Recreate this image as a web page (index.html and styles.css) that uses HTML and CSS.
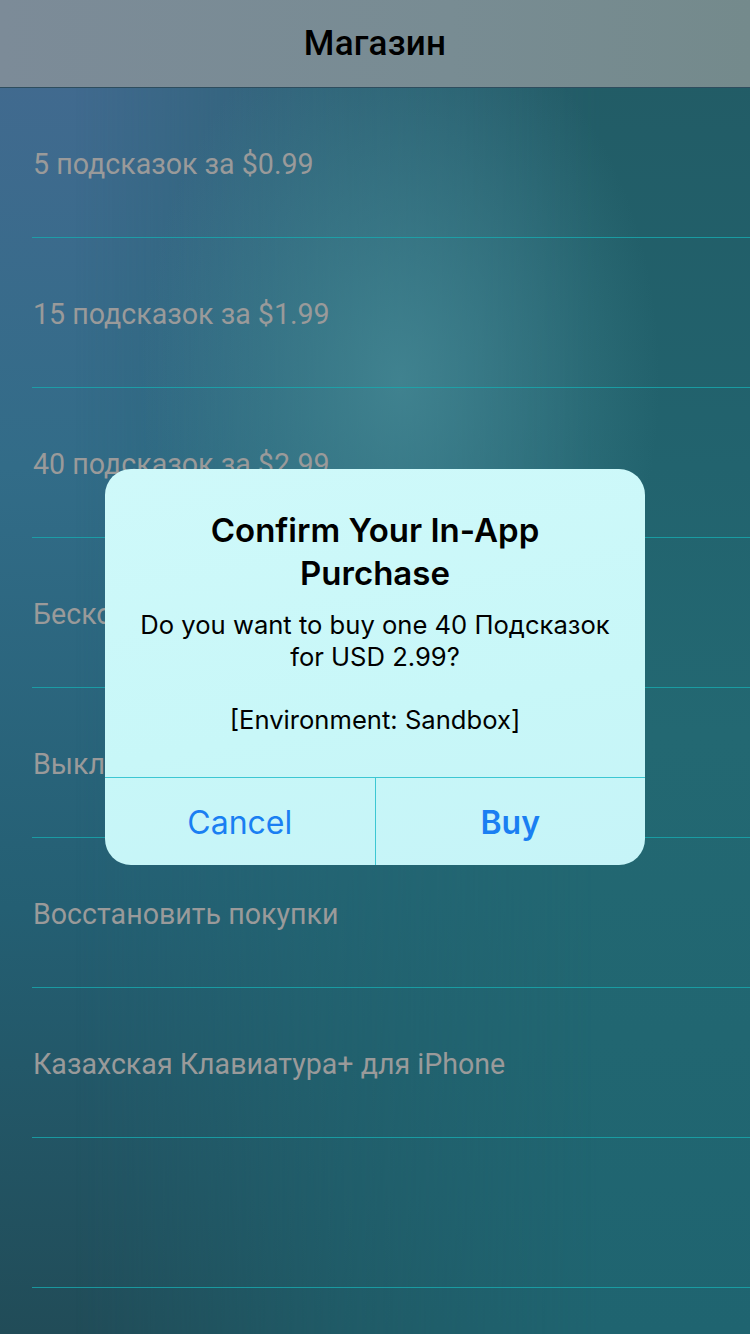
FILE: index.html
```html
<!DOCTYPE html>
<html lang="ru">
<head>
<meta charset="utf-8">
<title>Магазин</title>
<link rel="stylesheet" href="styles.css">
</head>
<body>
<div class="screen">
  <div class="content">
    <header class="navbar">
      <h1 class="nav-title">Магазин</h1>
    </header>
    <ul class="list">
      <li class="row"><span class="row-text">5 подсказок за $0.99</span></li>
      <li class="row"><span class="row-text">15 подсказок за $1.99</span></li>
      <li class="row"><span class="row-text">40 подсказок за $2.99</span></li>
      <li class="row"><span class="row-text">Бесконечные подсказки</span></li>
      <li class="row"><span class="row-text">Выключить рекламу</span></li>
      <li class="row"><span class="row-text">Восстановить покупки</span></li>
      <li class="row"><span class="row-text">Казахская Клавиатура+ для iPhone</span></li>
      <li class="row"><span class="row-text"></span></li>
    </ul>
  </div>

  <div class="alert" role="dialog">
    <div class="alert-body">
      <h2 class="alert-title">Confirm Your In-App Purchase</h2>
      <p class="alert-message">Do you want to buy one 40 Подсказок<br>for USD 2.99?<br><br>[Environment: Sandbox]</p>
    </div>
    <div class="alert-actions">
      <button class="alert-btn">Cancel</button>
      <button class="alert-btn alert-btn-primary">Buy</button>
    </div>
  </div>
</div>
</body>
</html>
```
FILE: styles.css
```css
* { box-sizing: border-box; }
html, body {
  margin: 0;
  padding: 0;
}
body {
  width: 750px;
  height: 1334px;
  overflow: hidden;
  font-family: Roboto, "Noto Sans", sans-serif;
}
.screen {
  position: relative;
  width: 750px;
  height: 1334px;
  overflow: hidden;
  background: linear-gradient(180deg, #416a8f 6%, #326c88 35%, #245f73 68%, #214c58 100%);
}
.screen::before {
  content: "";
  position: absolute;
  inset: 0;
  background: linear-gradient(180deg, #225c66 6%, #22636e 35%, #236872 55%, #1f6470 100%);
  -webkit-mask-image: linear-gradient(90deg, rgba(0,0,0,0) 10%, rgba(0,0,0,0.6) 45%, #000 80%);
  mask-image: linear-gradient(90deg, rgba(0,0,0,0) 10%, rgba(0,0,0,0.6) 45%, #000 80%);
}
.screen::after {
  content: "";
  position: absolute;
  inset: 0;
  background:
    radial-gradient(ellipse 260px 380px at 400px 380px, rgba(72, 140, 152, 0.75), rgba(72, 140, 152, 0) 100%);
}
.content {
  position: relative;
  z-index: 1;
}
.navbar {
  height: 88px;
  display: flex;
  align-items: center;
  justify-content: center;
  background: linear-gradient(90deg, #7c8b98 0%, #788c93 60%, #748a8c 100%);
  border-bottom: 1px solid #2e4d5e;
}
.nav-title {
  margin: 0;
  font-family: Roboto, sans-serif;
  font-weight: 500;
  font-size: 35px;
  color: #000;
  letter-spacing: 0.2px;
}
.list {
  list-style: none;
  margin: 0;
  padding: 0;
}
.row {
  height: 150px;
  margin-left: 32px;
  display: flex;
  align-items: center;
  border-bottom: 1px solid rgba(24, 170, 175, 0.8);
}
.row-text {
  margin-left: 1px;
  margin-top: 2px;
  font-size: 28.6px;
  color: #9a9a9a;
}

.alert {
  position: absolute;
  z-index: 2;
  left: 105px;
  top: 469px;
  width: 540px;
  height: 396px;
  border-radius: 26px;
  overflow: hidden;
  background: linear-gradient(170deg, #cff9fa 0%, #c8f7f8 60%, #c6f4f8 100%);
  display: flex;
  flex-direction: column;
  font-family: Inter, "Noto Sans", sans-serif;
  text-align: center;
}
.alert-body {
  flex: 1;
  padding: 40px 20px 0;
}
.alert-title {
  margin: 0 auto;
  width: 380px;
  font-size: 33px;
  font-weight: 600;
  line-height: 43px;
  color: #000;
}
.alert-message {
  margin: 14px 0 0;
  font-size: 25.6px;
  line-height: 31.5px;
  color: #000;
}
.alert-actions {
  height: 88px;
  display: flex;
  border-top: 1px solid #3cc7d3;
}
.alert-btn {
  flex: 1;
  border: none;
  background: transparent;
  font-family: Inter, "Noto Sans", sans-serif;
  font-size: 32px;
  color: #1a7ff2;
  padding: 2px 0 0;
}
.alert-btn + .alert-btn {
  border-left: 1px solid #3cc7d3;
}
.alert-btn-primary {
  font-weight: 600;
}
```
